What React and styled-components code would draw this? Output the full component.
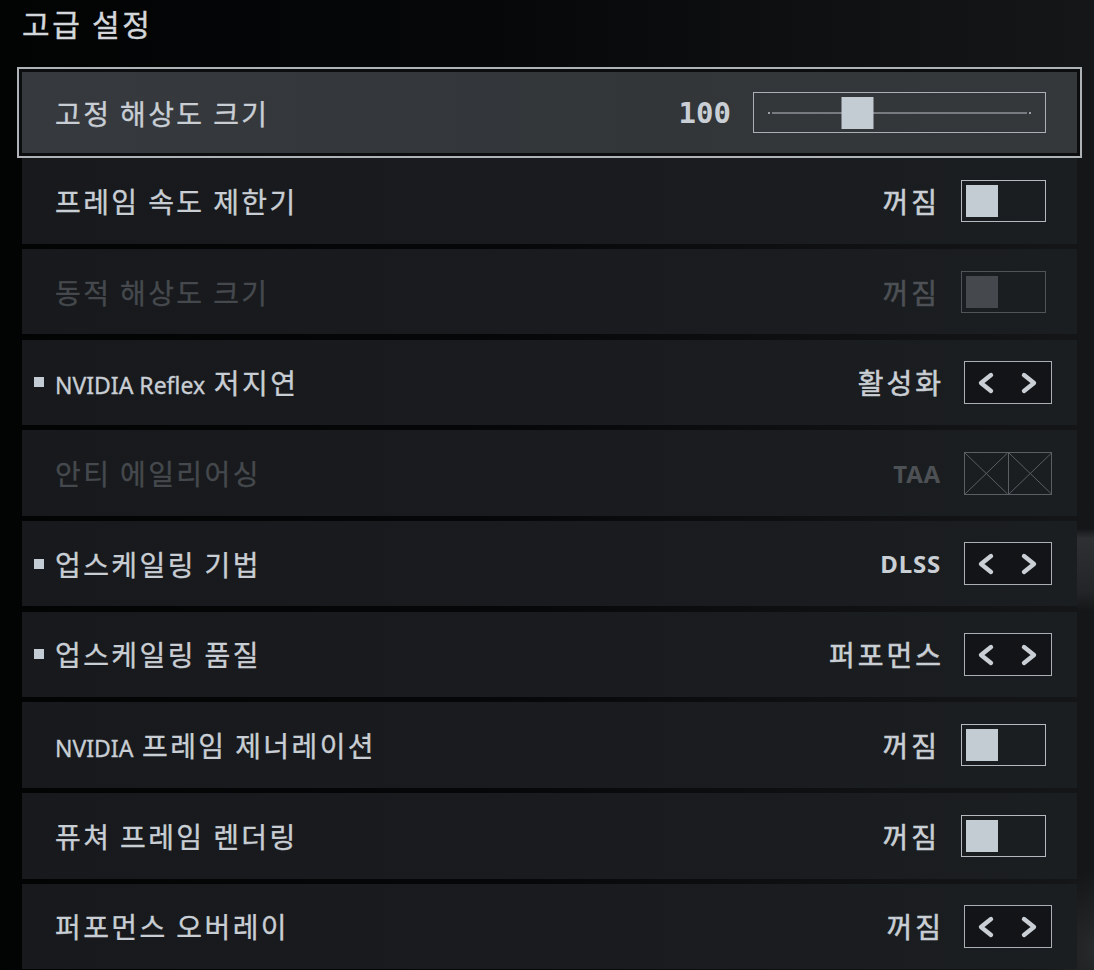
import styled, { createGlobalStyle } from "styled-components";

const GlobalStyle = createGlobalStyle`
  html, body {
    margin: 0;
    padding: 0;
    background: #060708;
  }
  body {
    font-family: "Noto Sans", "Noto Sans CJK KR", sans-serif;
  }
`;

const settings = [
  { label: "고정 해상도 크기", type: "slider", value: "100", selected: true },
  { label: "프레임 속도 제한기", type: "toggle", value: "꺼짐" },
  { label: "동적 해상도 크기", type: "toggle", value: "꺼짐", disabled: true },
  { label: ["NVIDIA Reflex", " 저지연"], type: "arrows", value: "활성화", bullet: true },
  { label: "안티 에일리어싱", type: "locked", value: "TAA", disabled: true },
  { label: "업스케일링 기법", type: "arrows", value: "DLSS", bullet: true, latin: true },
  { label: "업스케일링 품질", type: "arrows", value: "퍼포먼스", bullet: true },
  { label: ["NVIDIA", " 프레임 제너레이션"], type: "toggle", value: "꺼짐" },
  { label: "퓨쳐 프레임 렌더링", type: "toggle", value: "꺼짐" },
  { label: "퍼포먼스 오버레이", type: "arrows", value: "꺼짐" },
];

const Slider = ({ value }) => {
  const x = 16 + ((value / 200) * 0.55) * 260;
  return (
    <SliderBox>
      <svg width="291" height="39" viewBox="0 0 291 39">
        <rect x="14" y="19" width="2" height="2" fill="#9aa0a5" />
        <line x1="18" y1="20" x2="273" y2="20" stroke="#8e9398" strokeWidth="1.4" />
        <rect x="275" y="19" width="2" height="2" fill="#9aa0a5" />
        <rect x={x} y="4" width="32" height="32" fill="#c4ccd3" />
      </svg>
    </SliderBox>
  );
};

const Toggle = ({ disabled }) => (
  <ToggleBox $disabled={disabled}>
    <Knob $disabled={disabled} />
  </ToggleBox>
);

const Arrows = () => (
  <ArrowBox>
    <svg width="86" height="41" viewBox="0 0 86 41">
      <g
        fill="none"
        stroke="#c9cfd4"
        strokeWidth="4.4"
        strokeLinecap="round"
        strokeLinejoin="round"
      >
        <polyline points="26,13 16,21 26,29" />
        <polyline points="59,13 69,21 59,29" />
      </g>
    </svg>
  </ArrowBox>
);

const Crossed = () => (
  <LockedBox>
    {[0, 1].map((i) => (
      <LockedCell key={i}>
        <svg width="100%" height="100%" viewBox="0 0 43 41" preserveAspectRatio="none">
          <line x1="0" y1="0" x2="43" y2="41" stroke="#5b5f63" strokeWidth="1" />
          <line x1="43" y1="0" x2="0" y2="41" stroke="#5b5f63" strokeWidth="1" />
        </svg>
      </LockedCell>
    ))}
  </LockedBox>
);

const App = () => {
  return (
    <Page>
      <GlobalStyle />
      <Title>고급 설정</Title>
      <List>
        {settings.map((s, index) => {
          const boxed = s.type === "arrows" || s.type === "locked";
          return (
            <Row key={index} $selected={s.selected}>
              <BulletSlot>{s.bullet && <Bullet />}</BulletSlot>
              <Label $disabled={s.disabled}>
                {Array.isArray(s.label) ? (
                  <>
                    <Latin>{s.label[0]}</Latin>
                    {s.label[1]}
                  </>
                ) : (
                  s.label
                )}
              </Label>
              <Value
                $disabled={s.disabled}
                $mono={s.type === "slider"}
                $latin={s.latin || s.type === "locked"}
                $gap={boxed ? 23 : s.type === "slider" ? 22 : 24}
              >
                {s.value}
              </Value>
              {s.type === "slider" && <Slider value={100} />}
              {s.type === "toggle" && <Toggle disabled={s.disabled} />}
              {s.type === "arrows" && <Arrows />}
              {s.type === "locked" && <Crossed />}
            </Row>
          );
        })}
      </List>
    </Page>
  );
};

const Page = styled.div`
  width: 1094px;
  height: 970px;
  overflow: hidden;
  box-sizing: border-box;
  padding: 5px 0 0 22px;
  background:
    linear-gradient(180deg, rgba(0, 0, 0, 0) 0%, rgba(0, 0, 0, 0) 54.5%, rgba(52, 54, 57, 0.8) 55.5%, rgba(44, 46, 49, 0.6) 61%, rgba(0, 0, 0, 0) 63%) right / 17px 100% no-repeat,
    radial-gradient(ellipse 60px 80px at 1094px 950px, rgba(60, 60, 60, 0.5), rgba(0, 0, 0, 0)),
    linear-gradient(90deg, #020303 0%, #060708 45%, #0e1012 75%, #141618 100%);
`;

const Title = styled.h1`
  margin: 0;
  font-family: "Noto Sans CJK KR", sans-serif;
  font-size: 30px;
  line-height: 36px;
  font-weight: 400;
  letter-spacing: 2.7px;
  -webkit-text-stroke: 0.4px #d3d7db;
  color: #d3d7db;
`;

const List = styled.div`
  margin-top: 31px;
  width: 1055px;
  display: flex;
  flex-direction: column;
  gap: 5.2px;
`;

const Row = styled.div`
  height: ${(p) => (p.$selected ? 81 : 85.5)}px;
  flex-shrink: 0;
  box-sizing: border-box;
  display: flex;
  align-items: center;
  padding: 0 31px 0 12px;
  background: ${(p) =>
    p.$selected
      ? "linear-gradient(90deg, #36393d 0%, #333639 60%, #35383b 100%)"
      : "linear-gradient(90deg, #17191c 0%, #191b1e 55%, #1b1e21 100%)"};
  box-shadow: ${(p) =>
    p.$selected ? "0 0 0 3px #0c0d0e, 0 0 0 5px #aeb3b8" : "none"};
`;

const BulletSlot = styled.span`
  width: 10px;
  height: 10px;
  margin-right: 11px;
  flex-shrink: 0;
`;

const Bullet = styled.span`
  display: block;
  width: 10px;
  height: 10px;
  background: #c3ccd4;
`;

const Label = styled.span`
  flex: 1;
  font-family: "Noto Sans CJK KR", sans-serif;
  font-size: 28px;
  font-weight: 400;
  letter-spacing: 2.4px;
  color: ${(p) => (p.$disabled ? "#45494d" : "#c8ced4")};
  -webkit-text-stroke: 0.35px ${(p) => (p.$disabled ? "#45494d" : "#c8ced4")};
  white-space: nowrap;
`;

const Latin = styled.span`
  font-family: "Noto Sans", sans-serif;
  font-size: 23px;
  letter-spacing: 0;
`;

const Value = styled.span`
  margin-right: ${(p) => p.$gap - (p.$mono || p.$latin ? 0 : 3)}px;
  font-family: ${(p) =>
    p.$mono
      ? '"DejaVu Sans Mono", monospace'
      : p.$latin
      ? '"Noto Sans", sans-serif'
      : '"Noto Sans CJK KR", sans-serif'};
  font-size: ${(p) => (p.$mono ? 29 : p.$latin ? 24 : 28)}px;
  font-weight: ${(p) => (p.$mono || p.$latin ? 700 : 400)};
  letter-spacing: ${(p) => (p.$latin ? "0.8px" : p.$mono ? "0" : "3px")};
  color: ${(p) => (p.$disabled ? "#4d5155" : "#c9cfd4")};
  -webkit-text-stroke: ${(p) =>
    p.$mono || p.$latin ? "0" : `0.55px ${p.$disabled ? "#4d5155" : "#c9cfd4"}`};
  white-space: nowrap;
`;

const SliderBox = styled.div`
  width: 293px;
  height: 41px;
  box-sizing: border-box;
  border: 1px solid #aab0b5;
  display: flex;
`;

const ToggleBox = styled.div`
  width: 85px;
  height: 42px;
  box-sizing: border-box;
  border: 1px solid ${(p) => (p.$disabled ? "#505458" : "#b4babf")};
  padding: 4px;
  display: flex;
  align-items: center;
`;

const Knob = styled.span`
  width: 32px;
  height: 32px;
  background: ${(p) => (p.$disabled ? "#45484c" : "#c4ccd3")};
`;

const ArrowBox = styled.div`
  width: 88px;
  height: 43px;
  margin-right: -6px;
  box-sizing: border-box;
  border: 1px solid #a9afb4;
  background: #121417;
  display: flex;
`;

const LockedBox = styled.div`
  width: 88px;
  height: 43px;
  margin-right: -6px;
  box-sizing: border-box;
  border: 1px solid #5b5f63;
  display: flex;
`;

const LockedCell = styled.div`
  flex: 1;
  display: flex;
  & + & {
    border-left: 1px solid #5b5f63;
  }
  svg {
    display: block;
  }
`;

export default App;
